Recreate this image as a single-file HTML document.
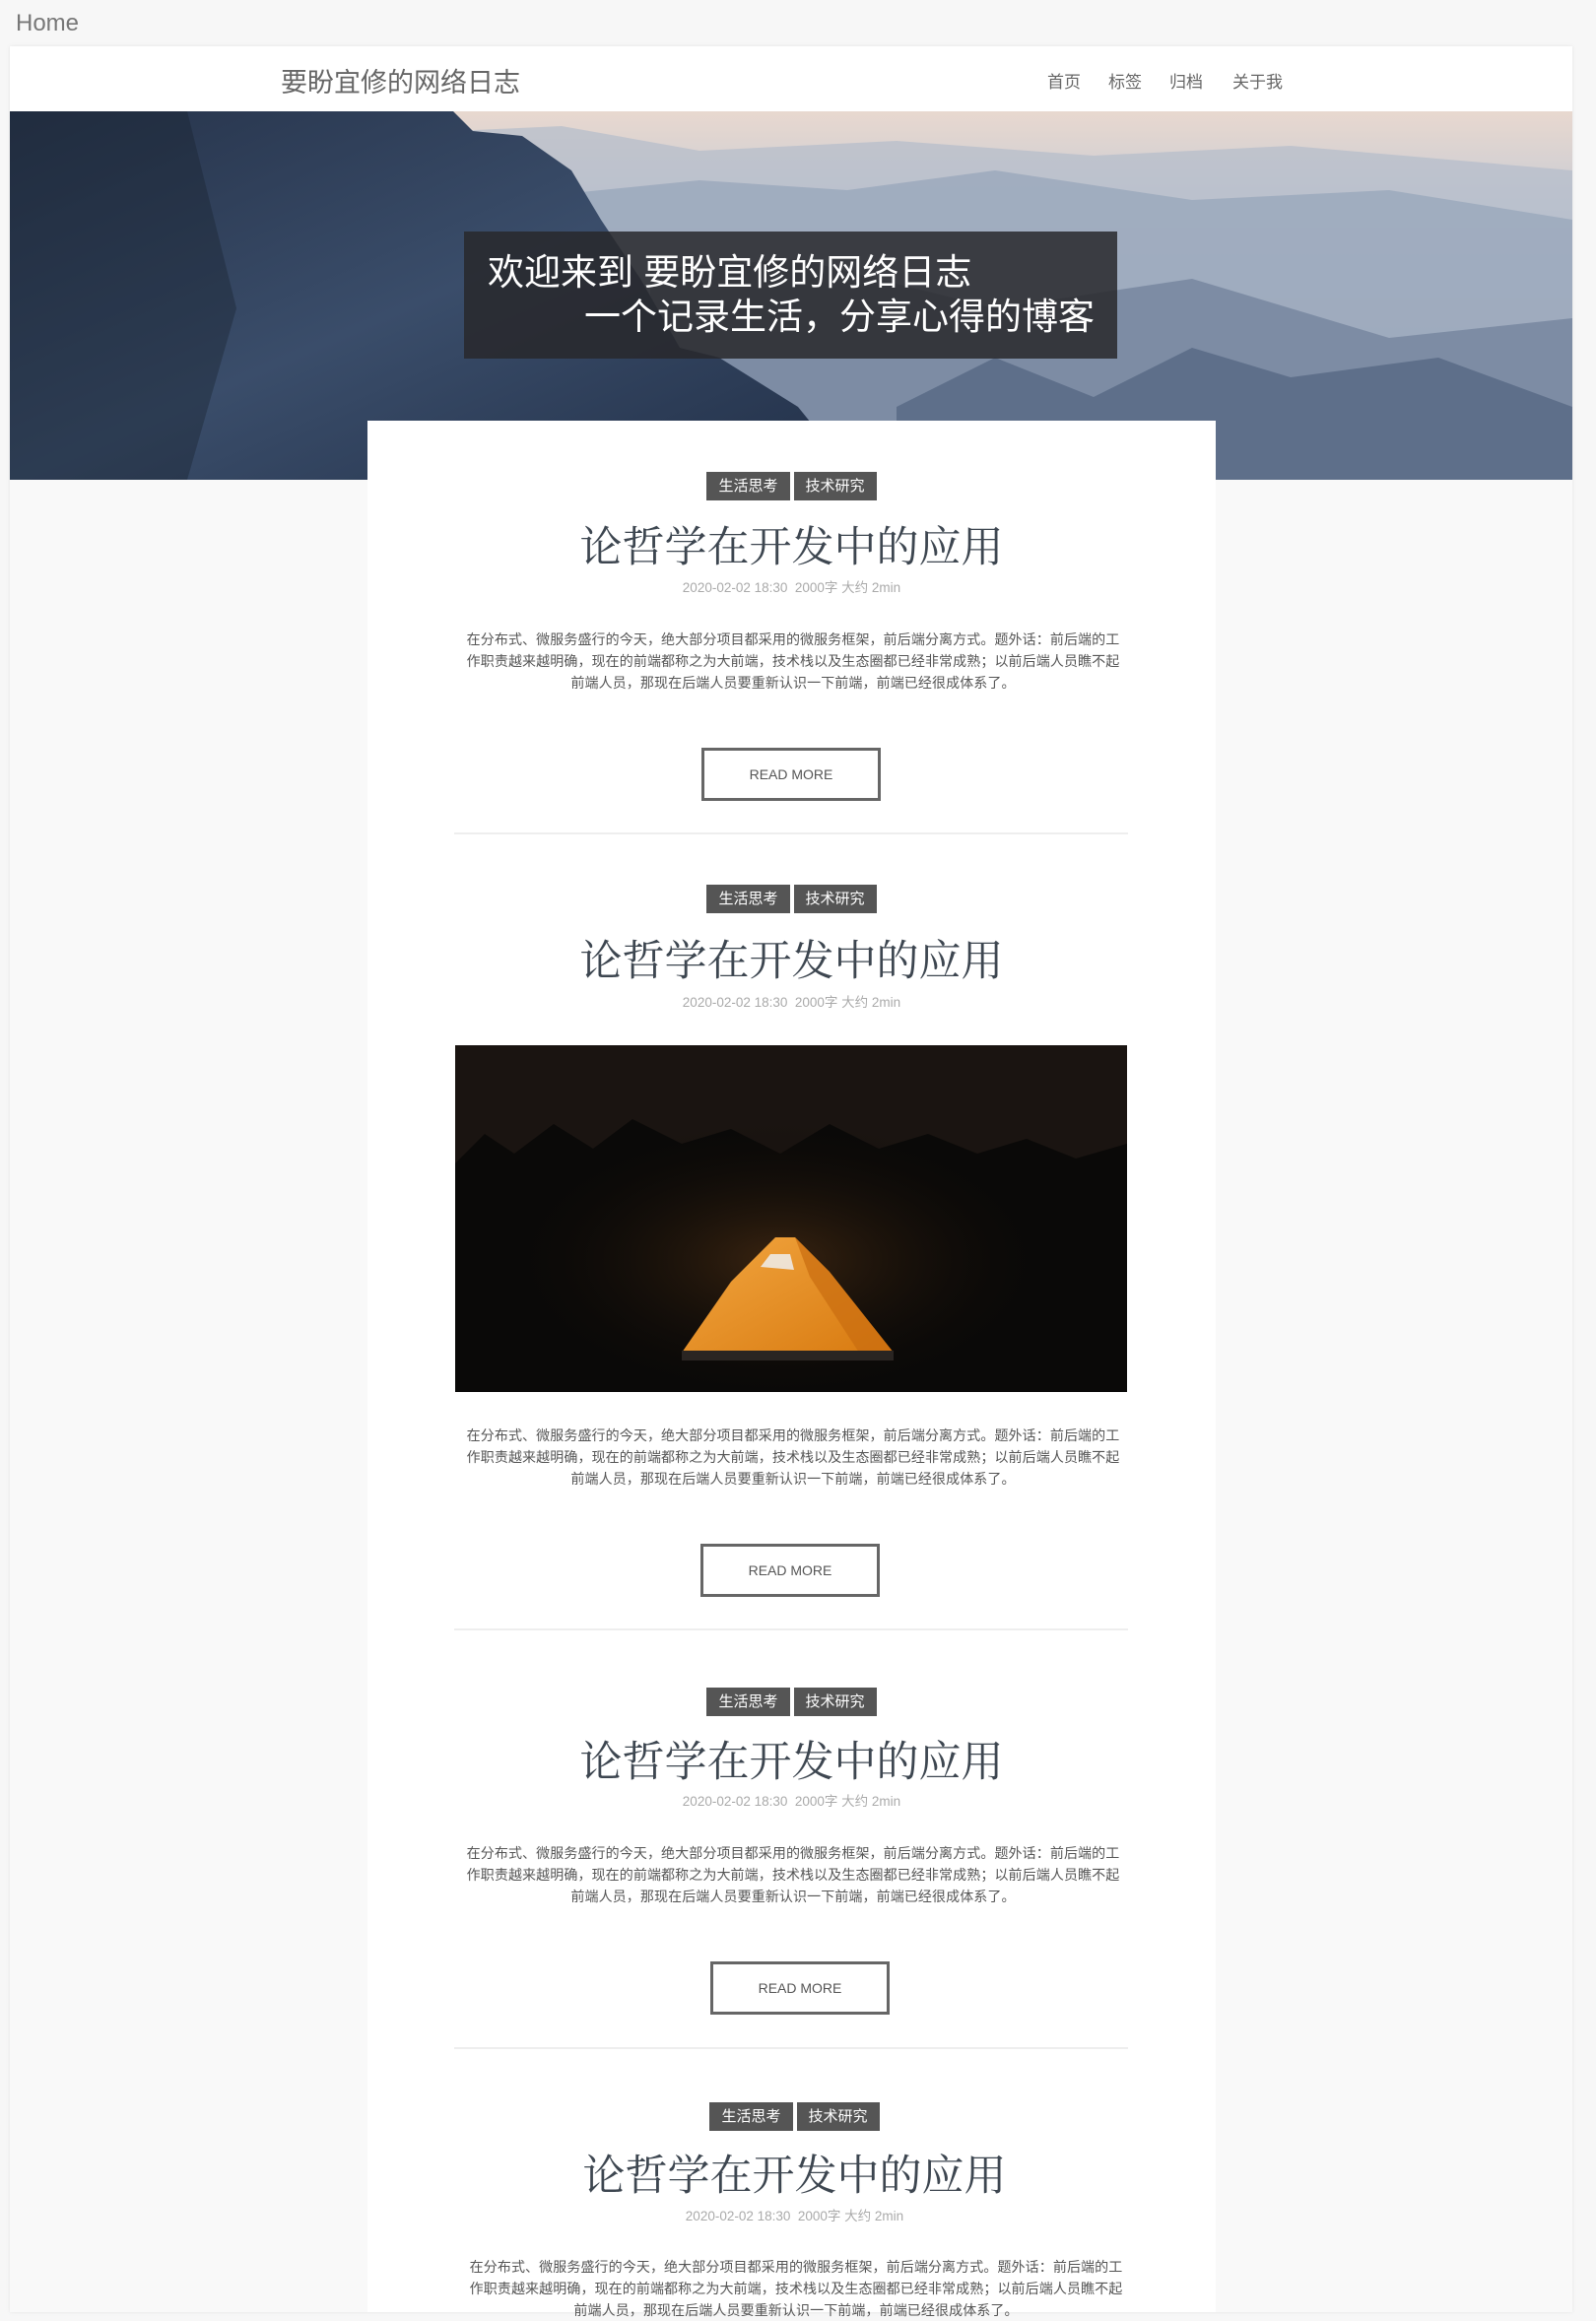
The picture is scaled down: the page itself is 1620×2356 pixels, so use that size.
<!DOCTYPE html>
<html><head><meta charset="utf-8"><style>
*{margin:0;padding:0;box-sizing:border-box}
body{width:1620px;height:2338px;background:#f7f7f7;font-family:"Liberation Sans","Noto Sans CJK SC",sans-serif;position:relative;overflow:hidden}
.abs{position:absolute}
.home{left:16px;top:10px;font-size:24px;color:#777}
.wrap{left:10px;top:47px;width:1586px;height:2300px;background:#f9f9f9;box-shadow:0 0 4px rgba(0,0,0,.08)}
.hdr{left:10px;top:47px;width:1586px;height:66px;background:#fff}
.site{left:285px;top:62px;font-size:27px;color:#666}
.nav{top:69px;font-size:17px;color:#666}
.card{left:373px;top:427px;width:861px;height:1920px;background:#fff}
.tag{height:29px;line-height:29px;background:#555;color:#fff;font-size:15px;padding:0 12px;display:inline-block;margin:0 2px}
.tags{left:373px;width:861px;text-align:center}
.title{left:373px;width:861px;text-align:center;font-family:"Liberation Serif","Noto Serif CJK SC",serif;font-size:43px;color:#3d4650;line-height:60px}
.meta{left:373px;width:861px;text-align:center;font-size:13.5px;color:#aaa;line-height:20px}
.para{left:442px;width:726px;text-align:center;font-size:14px;letter-spacing:.1px;color:#555;line-height:22px;white-space:nowrap}
.btn{width:182px;height:54px;border:3px solid #666;text-align:center;line-height:48px;font-size:14px;color:#555}
.div{left:461px;width:684px;height:2px;background:#eee}
</style></head><body>
<div class="abs home">Home</div>
<div class="abs wrap"></div>
<div class="abs hdr"></div>
<div class="abs site">要盼宜修的网络日志</div>
<div class="abs nav" style="left:1063px">首页</div>
<div class="abs nav" style="left:1125px">标签</div>
<div class="abs nav" style="left:1187px">归档</div>
<div class="abs nav" style="left:1251px">关于我</div>
<svg class="abs" style="left:10px;top:113px" width="1586" height="374" viewBox="0 0 1586 374">
<defs>
<linearGradient id="sky" x1="0" y1="0" x2="0" y2="1"><stop offset="0" stop-color="#e8d8cf"/><stop offset=".25" stop-color="#c9ccd4"/><stop offset="1" stop-color="#8a9ab0"/></linearGradient>
<linearGradient id="rock" x1="0" y1="0" x2="1" y2="1"><stop offset="0" stop-color="#26334a"/><stop offset=".5" stop-color="#3a4d6a"/><stop offset="1" stop-color="#223048"/></linearGradient>
</defs>
<rect width="1586" height="374" fill="url(#sky)"/>
<path d="M450 20 L560 15 L700 40 L900 30 L1100 45 L1300 35 L1586 60 L1586 374 L450 374Z" fill="#b3bccb" opacity=".7"/>
<path d="M500 90 L700 70 L850 80 L1000 60 L1200 90 L1400 80 L1586 110 L1586 374 L500 374Z" fill="#9aa7bb" opacity=".8"/>
<path d="M650 160 L800 150 L1000 200 L1200 170 L1400 230 L1586 210 L1586 374 L650 374Z" fill="#7d8ca4"/>
<path d="M900 300 L1000 250 L1100 290 L1200 240 L1300 270 L1450 250 L1586 300 L1586 374 L900 374Z" fill="#5e6f8a"/>
<path d="M0 0 L450 0 L470 20 L520 25 L570 60 L600 110 L640 170 L680 240 L720 250 L800 300 L860 374 L0 374Z" fill="url(#rock)"/>
<path d="M0 0 L180 0 L230 200 L180 374 L0 374Z" fill="#1a2230" opacity=".4"/>
</svg>
<div class="abs" style="left:471px;top:235px;width:663px;height:129px;background:rgba(40,40,44,.85)"></div>
<div class="abs" style="left:495px;top:255px;font-size:37px;color:#fff;line-height:44px">欢迎来到 要盼宜修的网络日志</div>
<div class="abs" style="left:471px;top:300px;width:640px;text-align:right;font-size:37px;color:#fff;line-height:44px">一个记录生活，分享心得的博客</div>
<div class="abs card"></div>

<!-- post 1 -->
<div class="abs tags" style="top:479px"><span class="tag">生活思考</span><span class="tag">技术研究</span></div>
<div class="abs title" style="top:527px">论哲学在开发中的应用</div>
<div class="abs meta" style="top:587px">2020-02-02 18:30&nbsp;&nbsp;2000字 大约 2min</div>
<div class="abs para" style="top:638px">在分布式、微服务盛行的今天，绝大部分项目都采用的微服务框架，前后端分离方式。题外话：前后端的工<br>作职责越来越明确，现在的前端都称之为大前端，技术栈以及生态圈都已经非常成熟；以前后端人员瞧不起<br>前端人员，那现在后端人员要重新认识一下前端，前端已经很成体系了。</div>
<div class="abs btn" style="left:712px;top:759px">READ MORE</div>
<div class="abs div" style="top:845px"></div>

<!-- post 2 -->
<div class="abs tags" style="top:898px"><span class="tag">生活思考</span><span class="tag">技术研究</span></div>
<div class="abs title" style="top:947px">论哲学在开发中的应用</div>
<div class="abs meta" style="top:1008px">2020-02-02 18:30&nbsp;&nbsp;2000字 大约 2min</div>
<svg class="abs" style="left:462px;top:1061px" width="682" height="352" viewBox="0 0 682 352">
<defs><radialGradient id="glow" cx=".48" cy=".62" r=".4"><stop offset="0" stop-color="#3a2410"/><stop offset="1" stop-color="#0d0a08" stop-opacity="0"/></radialGradient>
<linearGradient id="tent" x1="0" y1="0" x2="1" y2="1"><stop offset="0" stop-color="#f2a640"/><stop offset="1" stop-color="#d87a10"/></linearGradient></defs>
<rect width="682" height="352" fill="#1a1411"/>
<path d="M0 120 L30 90 L60 110 L100 80 L140 105 L180 75 L230 100 L280 85 L330 110 L380 80 L430 105 L480 90 L530 110 L580 95 L630 115 L682 100 L682 352 L0 352Z" fill="#0a0908"/>
<rect width="682" height="352" fill="url(#glow)"/>
<path d="M325 195 L345 195 L380 230 L445 312 L230 312 L280 240Z" fill="url(#tent)"/>
<path d="M345 195 L380 230 L445 312 L410 312 L360 235Z" fill="#c96c10" opacity=".7"/>
<path d="M310 225 L320 212 L340 212 L344 228Z" fill="#eee" opacity=".85"/>
<rect x="230" y="310" width="215" height="10" fill="#2a2522"/>
</svg>
<div class="abs para" style="top:1446px">在分布式、微服务盛行的今天，绝大部分项目都采用的微服务框架，前后端分离方式。题外话：前后端的工<br>作职责越来越明确，现在的前端都称之为大前端，技术栈以及生态圈都已经非常成熟；以前后端人员瞧不起<br>前端人员，那现在后端人员要重新认识一下前端，前端已经很成体系了。</div>
<div class="abs btn" style="left:711px;top:1567px">READ MORE</div>
<div class="abs div" style="top:1653px"></div>

<!-- post 3 -->
<div class="abs tags" style="top:1713px"><span class="tag">生活思考</span><span class="tag">技术研究</span></div>
<div class="abs title" style="top:1760px">论哲学在开发中的应用</div>
<div class="abs meta" style="top:1819px">2020-02-02 18:30&nbsp;&nbsp;2000字 大约 2min</div>
<div class="abs para" style="top:1870px">在分布式、微服务盛行的今天，绝大部分项目都采用的微服务框架，前后端分离方式。题外话：前后端的工<br>作职责越来越明确，现在的前端都称之为大前端，技术栈以及生态圈都已经非常成熟；以前后端人员瞧不起<br>前端人员，那现在后端人员要重新认识一下前端，前端已经很成体系了。</div>
<div class="abs btn" style="left:721px;top:1991px">READ MORE</div>
<div class="abs div" style="top:2078px"></div>

<!-- post 4 -->
<div class="abs tags" style="top:2134px;left:376px"><span class="tag">生活思考</span><span class="tag">技术研究</span></div>
<div class="abs title" style="top:2180px;left:376px">论哲学在开发中的应用</div>
<div class="abs meta" style="top:2240px;left:376px">2020-02-02 18:30&nbsp;&nbsp;2000字 大约 2min</div>
<div class="abs para" style="top:2290px;left:445px">在分布式、微服务盛行的今天，绝大部分项目都采用的微服务框架，前后端分离方式。题外话：前后端的工<br>作职责越来越明确，现在的前端都称之为大前端，技术栈以及生态圈都已经非常成熟；以前后端人员瞧不起<br>前端人员，那现在后端人员要重新认识一下前端，前端已经很成体系了。</div>
</body></html>
